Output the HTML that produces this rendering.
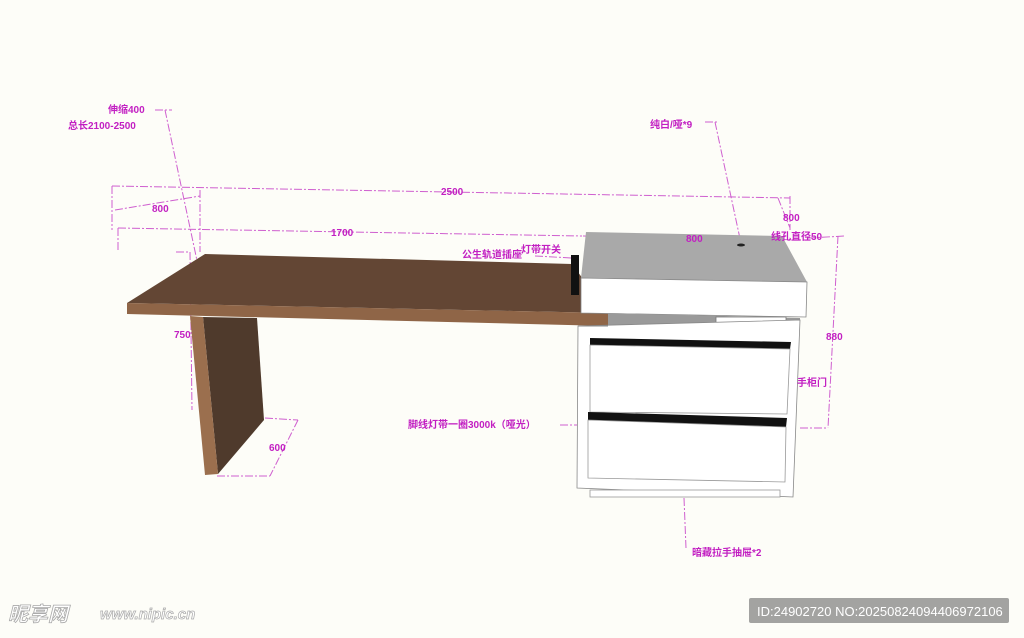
<!DOCTYPE html><html><head><meta charset="utf-8"><style>
body{margin:0;width:1024px;height:638px;background:#fdfdf8;overflow:hidden;font-family:"Liberation Sans","Noto Sans CJK SC",sans-serif}
svg{position:absolute;left:0;top:0}
text{font-family:"Liberation Sans","Noto Sans CJK SC",sans-serif;font-size:10px;font-weight:bold;fill:#c21fc2}
.d{stroke:#cf5fcf;stroke-width:1;fill:none;stroke-dasharray:8 2 2 2}
</style></head><body>
<svg width="1024" height="638" viewBox="0 0 1024 638">
<g class="d">
<line x1="112" y1="186" x2="790" y2="198"/>
<line x1="112" y1="186" x2="112" y2="230"/>
<line x1="118" y1="228" x2="582" y2="236"/>
<line x1="118" y1="228" x2="118" y2="250"/>
<line x1="115" y1="210" x2="200" y2="196"/>
<line x1="200" y1="190" x2="200" y2="252"/>
<line x1="165" y1="110" x2="206" y2="303"/>
<line x1="155" y1="110" x2="172" y2="110"/>
<line x1="583" y1="236" x2="808" y2="240"/>
<line x1="715" y1="122" x2="742" y2="248"/>
<line x1="705" y1="122" x2="718" y2="122"/>
<line x1="778" y1="198" x2="790" y2="228"/>
<line x1="790" y1="196" x2="790" y2="230"/>
<line x1="808" y1="238" x2="845" y2="236"/>
<line x1="838" y1="236" x2="828" y2="428"/>
<line x1="800" y1="428" x2="828" y2="428"/>
<line x1="190" y1="252" x2="192" y2="410"/>
<line x1="176" y1="252" x2="190" y2="252"/>
<line x1="217" y1="476" x2="270" y2="476"/>
<line x1="265" y1="418" x2="298" y2="420"/>
<line x1="298" y1="420" x2="270" y2="476"/>
<line x1="560" y1="425" x2="578" y2="425"/>
<line x1="684" y1="498" x2="686" y2="548"/>
<line x1="535" y1="256" x2="572" y2="258"/>
</g>
<polygon points="205,254 572,264 608,313 127,303" fill="#634634"/>
<polygon points="127,303 608,313 608,326 127,314" fill="#8f6547"/>
<!-- leg -->
<polygon points="203,317 257,318 264,420 218,474" fill="#4f3a2c"/>
<polygon points="190,316 203,317 218,474 205,475" fill="#9b6f4e"/>
<polygon points="586,232 782,236 807,282 581,278" fill="#a9a9a9"/>
<polygon points="581,278 807,282 806,317 581,313" fill="#ffffff" stroke="#888" stroke-width="0.8"/>
<rect x="571" y="255" width="8" height="40" fill="#111"/>
<polygon points="608,313 800,318 800,322 608,326" fill="#9a9a9a"/>
<rect x="716" y="317" width="70" height="10" fill="#fff" stroke="#777" stroke-width="0.8"/>
<ellipse cx="741" cy="245" rx="4" ry="1.5" fill="#222"/>
<polygon points="578,326 800,320 793,497 577,488" fill="#fff" stroke="#888" stroke-width="0.8"/>
<line x1="578" y1="326" x2="608" y2="326" stroke="#888"/>
<polygon points="590,338 791,342 790,349 590,345" fill="#111"/>
<polygon points="590,345 790,349 787,414 590,412" fill="#fff" stroke="#999" stroke-width="0.8"/>
<polygon points="588,412 787,418 786,427 588,420" fill="#111"/>
<polygon points="588,420 786,427 785,482 588,478" fill="#fff" stroke="#999" stroke-width="0.8"/>
<rect x="590" y="490" width="190" height="7" fill="#fff" stroke="#999" stroke-width="0.8"/>
<text x="108" y="113">伸缩400</text>
<text x="68" y="129">总长2100-2500</text>
<text x="441" y="195">2500</text>
<text x="152" y="212">800</text>
<text x="331" y="236">1700</text>
<text x="462" y="258">公生轨道插座</text>
<text x="521" y="253">灯带开关</text>
<text x="686" y="242">800</text>
<text x="771" y="240">线孔直径50</text>
<text x="783" y="221">800</text>
<text x="650" y="128">纯白/哑*9</text>
<text x="826" y="340">880</text>
<text x="797" y="386">手柜门</text>
<text x="174" y="338">750</text>
<text x="269" y="451">600</text>
<text x="408" y="428">脚线灯带一圈3000k（哑光）</text>
<text x="692" y="556">暗藏拉手抽屉*2</text>
<text x="8" y="621" style="font-size:20px;fill:#fff;stroke:#aaa;stroke-width:0.8;font-style:italic">昵享网</text>
<text x="100" y="619" style="font-size:15px;fill:#fff;stroke:#aaa;stroke-width:0.7;font-style:italic">www.nipic.cn</text>
<rect x="749" y="598" width="260" height="25" rx="2" fill="#a3a3a1"/>
<text x="757" y="616" style="font-size:13px;fill:#fff;font-weight:normal">ID:24902720 NO:20250824094406972106</text>
</svg>
</body></html>
